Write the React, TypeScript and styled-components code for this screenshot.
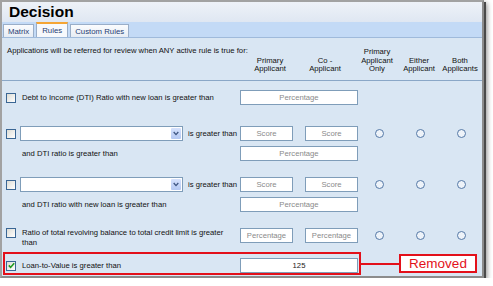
import React, { FC } from 'react';
import styled, { createGlobalStyle, css } from 'styled-components';

const Colors = {
    text: '#111111',
    tabText: '#1f3c73',
    panel: '#d9e6f3',
    tabBand: '#c3daf6',
    titleTop: '#eef2f8',
    titleBottom: '#dfe7f2',
    rule: '#8aa7c7',
    field: '#7f9db9',
    placeholder: '#8a8a8a',
    red: '#e3101a',
    accent: '#f5a534',
};

const GlobalStyle = createGlobalStyle`
    body {
        margin: 0;
        background: #ffffff;
        font-family: "Liberation Sans", Arial, sans-serif;
        color: ${Colors.text};
    }
`;

const Window = styled.div`
    box-sizing: border-box;
    width: 484px;
    height: 278px;
    display: flex;
    flex-direction: column;
    border: 2px solid #a2a2a2;
    border-right-color: #8c8c8c;
    border-bottom-color: #8c8c8c;
    box-shadow: 2px 2px 0 #4a4a4a, 3px 3px 5px rgba(0, 0, 0, 0.45);
    overflow: hidden;
`;

const TitleBar = styled.div`
    height: 20px;
    padding-left: 7px;
    background: linear-gradient(${Colors.titleTop}, ${Colors.titleBottom});
    font-size: 15.5px;
    font-weight: bold;
    line-height: 20px;
    color: #000;
`;

const TabStrip = styled.div`
    height: 15px;
    display: flex;
    align-items: flex-end;
    gap: 2px;
    padding-left: 1px;
    background: ${Colors.tabBand};
    border-bottom: 1px solid #9fbadb;
`;

const Tab = styled.div<{ $active?: boolean }>`
    box-sizing: border-box;
    height: 13px;
    padding: 0 4px;
    display: flex;
    align-items: center;
    font-size: 7.8px;
    color: ${Colors.tabText};
    border: 1px solid #9aaec8;
    border-bottom: none;
    background: linear-gradient(#fbfcfe, #e6ecf4);
    ${(p) =>
        p.$active &&
        css`
            height: 15px;
            padding: 0 5px;
            background: #f7f9fc;
            border-top: 2px solid ${Colors.accent};
        `}
`;

const Panel = styled.div`
    flex: 1;
    background: ${Colors.panel};
    font-size: 7.7px;
`;

const Header = styled.div`
    box-sizing: border-box;
    height: 43px;
    display: grid;
    grid-template-columns: 243px 50px 60px 44px 40px 42px;
    padding: 8px 0 6px;
    border-bottom: 1px solid ${Colors.rule};
`;

const Intro = styled.div`
    align-self: start;
    padding-left: 5px;
    line-height: 10px;
    white-space: nowrap;
`;

const ColumnTitle = styled.div`
    align-self: end;
    text-align: center;
    line-height: 8.7px;
`;

const RuleList = styled.div`
    display: flex;
    flex-direction: column;
    padding-left: 1px;
`;

const Rule = styled.div<{ $mt: number; $single?: boolean }>`
    margin-top: ${(p) => p.$mt}px;
    padding-left: 3px;
    display: grid;
    grid-template-columns: 14px 220px 53px 12px 53px 42px 41px 41px;
    grid-auto-rows: minmax(15px, auto);
    ${(p) => p.$single && 'grid-template-rows: 15px;'}
    row-gap: 5px;
    align-items: center;
`;

const Label = styled.div<{ $top?: boolean }>`
    grid-column: 2;
    padding: 0 12px 0 2px;
    line-height: 10px;
    ${(p) => p.$top && 'align-self: start;'}
`;

const Inline = styled.div`
    grid-column: 2;
    display: flex;
    align-items: center;
    gap: 5px;
    white-space: nowrap;
`;

const Field = styled.input<{ $col: string }>`
    grid-column: ${(p) => p.$col};
    box-sizing: border-box;
    width: 100%;
    height: 15px;
    margin: 0;
    padding: 0;
    border: 1px solid ${Colors.field};
    background: #fff;
    font-family: inherit;
    font-size: 7.7px;
    text-align: center;
    color: #222;
    outline: none;
    &::placeholder {
        color: ${Colors.placeholder};
    }
`;

const Combo = styled.div`
    box-sizing: border-box;
    width: 163px;
    height: 15px;
    display: flex;
    justify-content: flex-end;
    padding: 1px;
    border: 1px solid ${Colors.field};
    background: #fff;
`;

const ComboButton = styled.div`
    width: 10px;
    display: flex;
    align-items: center;
    justify-content: center;
    background: linear-gradient(#d6e2fd, #b4c8f3);
    border-radius: 1px;
`;

const Box = styled.div<{ $top?: boolean }>`
    box-sizing: border-box;
    width: 10px;
    height: 10px;
    display: flex;
    align-items: center;
    justify-content: center;
    border: 1px solid #3a6694;
    background: linear-gradient(135deg, #dcdcd5, #ffffff);
    ${(p) => p.$top && 'align-self: start;'}
`;

const Radio = styled.div<{ $col: number }>`
    grid-column: ${(p) => p.$col};
    justify-self: center;
    box-sizing: border-box;
    width: 9px;
    height: 9px;
    border-radius: 50%;
    border: 1.3px solid #5478a6;
    background: #eef3f9;
`;

const Highlight = styled.div`
    margin-top: 9px;
    display: flex;
    align-items: center;
`;

const RedBox = styled.div`
    box-sizing: border-box;
    width: 358px;
    padding: 4px 1px 0;
    display: grid;
    grid-template-columns: 14px 220px 118px;
    grid-template-rows: 15px;
    align-items: center;
    border: 2px solid ${Colors.red};
`;

const Leader = styled.div`
    width: 38px;
    height: 2px;
    background: ${Colors.red};
`;

const Callout = styled.div`
    box-sizing: border-box;
    width: 78px;
    height: 19px;
    display: flex;
    align-items: center;
    justify-content: center;
    border: 2px solid ${Colors.red};
    background: #fff;
    color: ${Colors.red};
    font-size: 13.5px;
    line-height: 1;
`;

const CheckBox: FC<{ checked?: boolean; top?: boolean }> = ({ checked, top }) => (
    <Box $top={top}>
        {checked && (
            <svg width="7" height="7" viewBox="0 0 7 7">
                <polyline points="0.8,3.4 2.6,5.4 6.2,1.2" fill="none" stroke="#1f9a1f" strokeWidth="1.6" />
            </svg>
        )}
    </Box>
);

const Dropdown: FC = () => (
    <Combo>
        <ComboButton>
            <svg width="6" height="5" viewBox="0 0 6 5">
                <polyline points="0.7,1 3,3.6 5.3,1" fill="none" stroke="#3e5582" strokeWidth="1.3" />
            </svg>
        </ComboButton>
    </Combo>
);

const Radios: FC = () => (
    <>
        <Radio $col={6} />
        <Radio $col={7} />
        <Radio $col={8} />
    </>
);

const App: FC = () => (
    <>
        <GlobalStyle />
        <Window>
            <TitleBar>Decision</TitleBar>
            <TabStrip>
                <Tab>Matrix</Tab>
                <Tab $active>Rules</Tab>
                <Tab>Custom Rules</Tab>
            </TabStrip>
            <Panel>
                <Header>
                    <Intro>Applications will be referred for review when ANY active rule is true for:</Intro>
                    <ColumnTitle>
                        Primary
                        <br />
                        Applicant
                    </ColumnTitle>
                    <ColumnTitle>
                        Co -
                        <br />
                        Applicant
                    </ColumnTitle>
                    <ColumnTitle>
                        Primary
                        <br />
                        Applicant
                        <br />
                        Only
                    </ColumnTitle>
                    <ColumnTitle>
                        Either
                        <br />
                        Applicant
                    </ColumnTitle>
                    <ColumnTitle>
                        Both
                        <br />
                        Applicants
                    </ColumnTitle>
                </Header>
                <RuleList>
                    <Rule $mt={9}>
                        <CheckBox />
                        <Label>Debt to Income (DTI) Ratio with new loan is greater than</Label>
                        <Field $col="3 / 6" placeholder="Percentage" readOnly />
                    </Rule>
                    <Rule $mt={21}>
                        <CheckBox />
                        <Inline>
                            <Dropdown />
                            is greater than
                        </Inline>
                        <Field $col="3" placeholder="Score" readOnly />
                        <Field $col="5" placeholder="Score" readOnly />
                        <Radios />
                        <Label>and DTI ratio is greater than</Label>
                        <Field $col="3 / 6" placeholder="Percentage" readOnly />
                    </Rule>
                    <Rule $mt={16}>
                        <CheckBox />
                        <Inline>
                            <Dropdown />
                            is greater than
                        </Inline>
                        <Field $col="3" placeholder="Score" readOnly />
                        <Field $col="5" placeholder="Score" readOnly />
                        <Radios />
                        <Label>and DTI ratio with new loan is greater than</Label>
                        <Field $col="3 / 6" placeholder="Percentage" readOnly />
                    </Rule>
                    <Rule $mt={16} $single>
                        <CheckBox top />
                        <Label $top>Ratio of total revolving balance to total credit limit is greater than</Label>
                        <Field $col="3" placeholder="Percentage" readOnly />
                        <Field $col="5" placeholder="Percentage" readOnly />
                        <Radios />
                    </Rule>
                    <Highlight>
                        <RedBox>
                            <CheckBox checked />
                            <Label>Loan-to-Value is greater than</Label>
                            <Field $col="3" defaultValue="125" readOnly />
                        </RedBox>
                        <Leader />
                        <Callout>Removed</Callout>
                    </Highlight>
                </RuleList>
            </Panel>
        </Window>
    </>
);

export default App;
